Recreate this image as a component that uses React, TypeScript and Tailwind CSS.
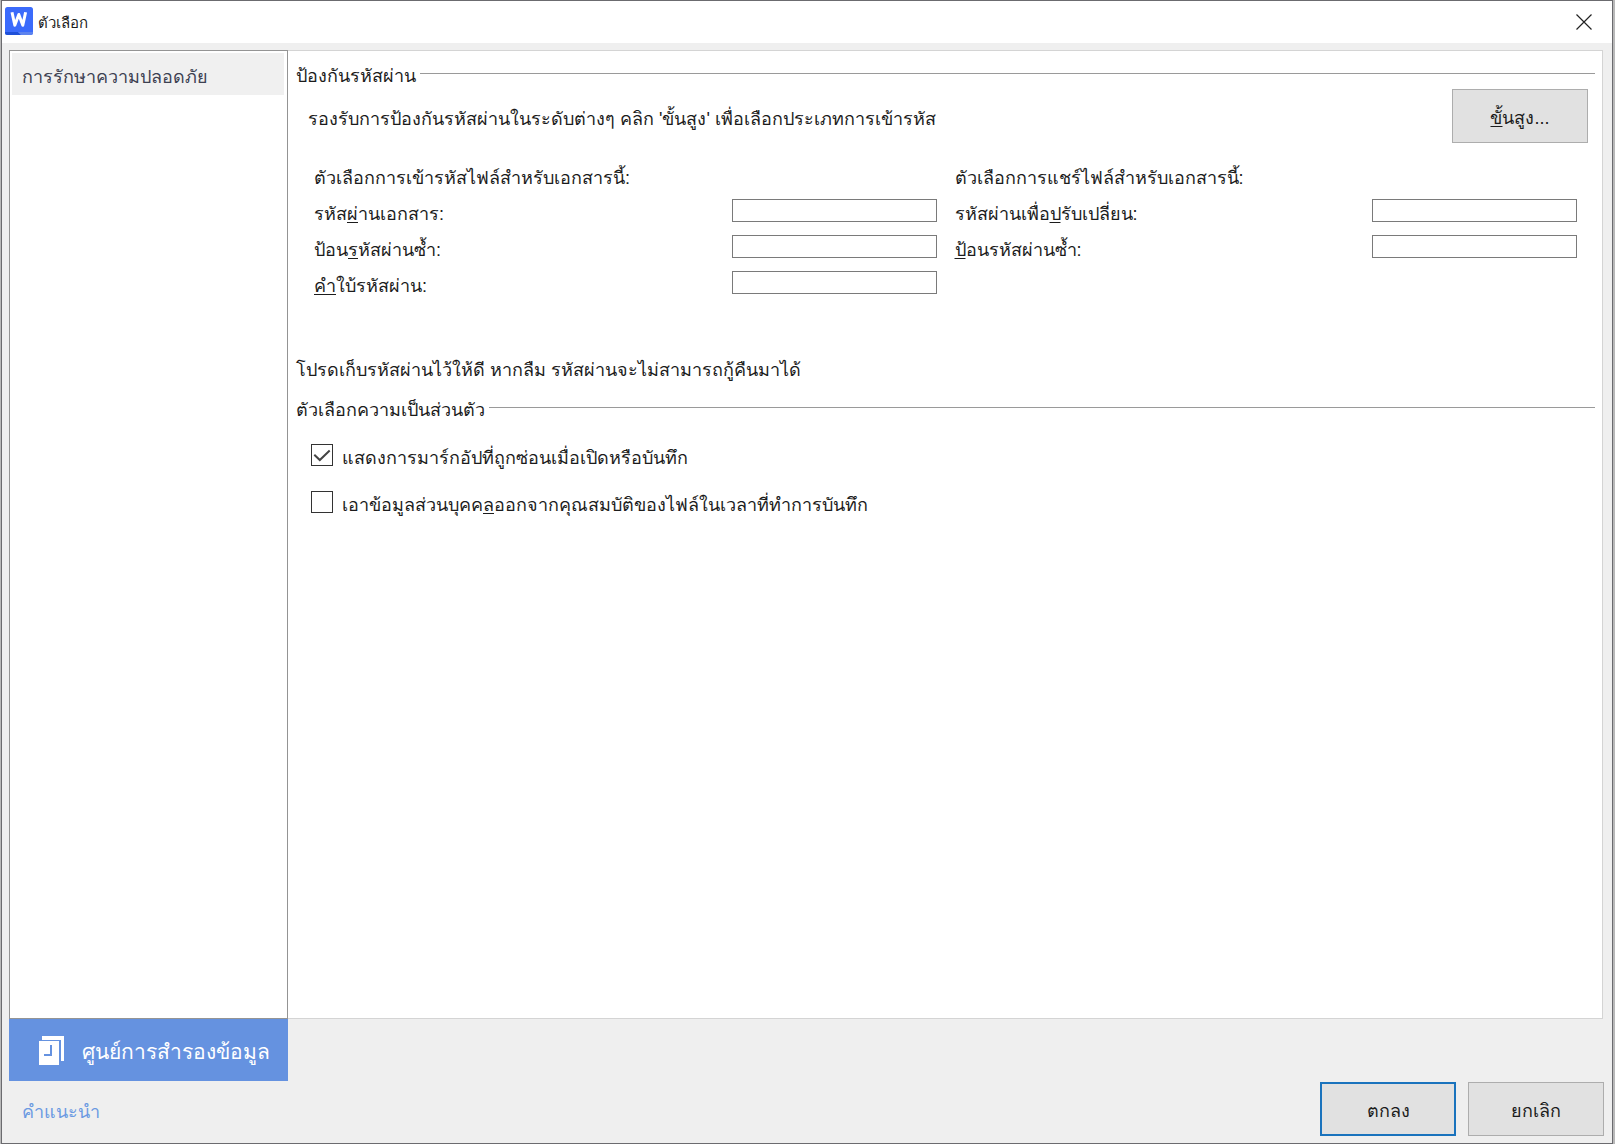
import { useState, type ReactNode } from "react";

function Key({ children }: { children: ReactNode }) {
  return <span className="underline decoration-1 underline-offset-2">{children}</span>;
}

function SectionTitle({ children }: { children: ReactNode }) {
  return (
    <div className="flex h-7 items-center gap-1">
      <h2 className="pt-0.5 whitespace-nowrap">{children}</h2>
      <div className="mb-1 h-px flex-1 bg-[#9a9a9a]" />
    </div>
  );
}

function Field({ id, type = "password", children }: { id: string; type?: string; children: ReactNode }) {
  return (
    <div className="flex h-9 items-center justify-between">
      <label htmlFor={id} className="whitespace-nowrap">
        {children}
      </label>
      <input
        id={id}
        type={type}
        className="mb-2 h-[23px] w-[205px] border border-[#7a7a7a] bg-white px-1 text-sm outline-none"
      />
    </div>
  );
}

function CheckRow({ id, initial, children }: { id: string; initial: boolean; children: ReactNode }) {
  const [on, setOn] = useState(initial);
  return (
    <div className="flex h-[47px] items-center gap-[9px]">
      <span className="relative mb-1.5 block size-[22px]">
        <input
          id={id}
          type="checkbox"
          checked={on}
          onChange={(e) => setOn(e.target.checked)}
          className="block size-[22px] appearance-none border border-[#333] bg-white"
        />
        {on && (
          <svg
            viewBox="0 0 22 22"
            className="pointer-events-none absolute inset-0 size-[22px]"
            fill="none"
            stroke="#444"
            strokeWidth="2"
          >
            <path d="M3.3 10.8 L8.8 16 L18.7 6.5" />
          </svg>
        )}
      </span>
      <label htmlFor={id} className="whitespace-nowrap">
        {children}
      </label>
    </div>
  );
}

export default function App() {
  return (
    <div className="min-h-screen bg-[#b9b9b9] pr-0.5 pl-px font-['Liberation_Sans',sans-serif] text-lg leading-6 text-[#1c1c1c]">
      <div className="flex min-h-screen flex-col border border-[#6b6b6f] bg-[#efefef]">
        <header className="flex h-[42px] items-center justify-between bg-white pr-4 pl-[3px]">
          <div className="flex items-center gap-[5px]">
            <svg viewBox="0 0 28 28" className="mb-0.5 size-7" aria-hidden="true">
              <rect width="28" height="28" rx="2.5" fill="#3b6bfb" />
              <path d="M0 25h13l3 3H2.5A2.5 2.5 0 0 1 0 25.5z" fill="#1f50d8" />
              <path d="M13 25h15v.5a2.500 2.500 0 0 1-2.500 2.500H16z" fill="#5d83ee" />
              <path
                d="M7 5.200L9.800 18.300L13.800 7.500L17.800 18.300L20.600 5.200"
                fill="none"
                stroke="#fff"
                strokeWidth="3"
                strokeLinejoin="round"
              />
            </svg>
            <h1 className="pt-0.5 text-[15px]">ตัวเลือก</h1>
          </div>
          <button type="button" aria-label="ปิด" className="flex size-6 items-center justify-center">
            <svg viewBox="0 0 16 16" className="size-4" fill="none" stroke="#222" strokeWidth="1.2">
              <path d="M0.5 0.5l15 15M15.5 0.5l-15 15" />
            </svg>
          </button>
        </header>

        <div className="flex flex-1 pt-[7px] pr-[9px] pl-[7px]">
          <nav className="flex w-[279px] flex-col border border-[#949494] bg-white p-0.5 pr-[3px]">
            <button type="button" className="h-[42px] bg-[#f0f0f0] px-2.5 pt-1.5 text-left text-[#3d4152]">
              การรักษาความปลอดภัย
            </button>
          </nav>
          <main className="flex-1 border border-l-0 border-[#d4d4d4] bg-white pt-2.5 pr-[7px] pl-2">
            <SectionTitle>ป้องกันรหัสผ่าน</SectionTitle>
            <div className="flex items-start justify-between pr-[7px] pl-3">
              <p className="pt-[18px] whitespace-nowrap">
                รองรับการป้องกันรหัสผ่านในระดับต่างๆ คลิก 'ขั้นสูง' เพื่อเลือกประเภทการเข้ารหัส
              </p>
              <button type="button" className="h-[54px] w-[136px] border border-[#adadad] bg-[#e1e1e1] pt-1">
                <Key>ขั้</Key>นสูง...
              </button>
            </div>
            <div className="mt-[17px] grid grid-cols-2 gap-x-[18px] pr-[18px] pl-[18px]">
              <div>
                <h3 className="flex h-9 items-center whitespace-nowrap">ตัวเลือกการเข้ารหัสไฟล์สำหรับเอกสารนี้:</h3>
                <Field id="open-password">
                  รหัส<Key>ผ่</Key>านเอกสาร:
                </Field>
                <Field id="open-repeat">
                  ป้อน<Key>ร</Key>หัสผ่านซ้ำ:
                </Field>
                <Field id="hint" type="text">
                  <Key>ค</Key>ำใบ้รหัสผ่าน:
                </Field>
              </div>
              <div>
                <h3 className="flex h-9 items-center whitespace-nowrap">ตัวเลือกการแชร์ไฟล์สำหรับเอกสารนี้:</h3>
                <Field id="edit-password">
                  รหัสผ่านเพื่อ<Key>ป</Key>รับเปลี่ยน:
                </Field>
                <Field id="edit-repeat">
                  <Key>ป้</Key>อนรหัสผ่านซ้ำ:
                </Field>
              </div>
            </div>
            <p className="mt-[54px] mb-[13px] whitespace-nowrap">
              โปรดเก็บรหัสผ่านไว้ให้ดี หากลืม รหัสผ่านจะไม่สามารถกู้คืนมาได้
            </p>
            <SectionTitle>ตัวเลือกความเป็นส่วนตัว</SectionTitle>
            <div className="mt-[11px] pl-[15px]">
              <CheckRow id="markup" initial={true}>
                แสดงการมาร์กอัปที่ถูกซ่อนเมื่อเปิดหรือบันทึก
              </CheckRow>
              <CheckRow id="personal" initial={false}>
                เอาข้อมูลส่วนบุคค<Key>ล</Key>ออกจากคุณสมบัติของไฟล์ในเวลาที่ทำการบันทึก
              </CheckRow>
            </div>
          </main>
        </div>

        <footer className="flex items-end justify-between pr-2 pb-[7px] pl-[7px]">
          <div className="w-[279px]">
            <button type="button" className="flex h-[62px] w-full items-center gap-[18px] bg-[#6592e0] pl-[30px] text-white">
              <svg viewBox="0 0 25 29" className="h-[29px] w-[25px]" aria-hidden="true">
                <path d="M3 0h22v25h-3V4H3z" fill="#fff" />
                <path d="M0 5h20v24H0z" fill="#fff" />
                <path d="M12 9v10H5" fill="none" stroke="#6592e0" strokeWidth="2" />
              </svg>
              <span className="pt-1 text-[21px] whitespace-nowrap">ศูนย์การสำรองข้อมูล</span>
            </button>
            <a href="#help" className="flex h-[55px] items-center pt-1.5 pl-[13px] text-[#6b9ae2]">
              คำแนะนำ
            </a>
          </div>
          <div className="flex gap-3">
            <button type="button" className="h-[54px] w-[136px] border-2 border-[#1a73bd] bg-[#e1e1e1] pt-1">
              ตกลง
            </button>
            <button type="button" className="h-[54px] w-[136px] border border-[#adadad] bg-[#e1e1e1] pt-1">
              ยกเลิก
            </button>
          </div>
        </footer>
      </div>
    </div>
  );
}
